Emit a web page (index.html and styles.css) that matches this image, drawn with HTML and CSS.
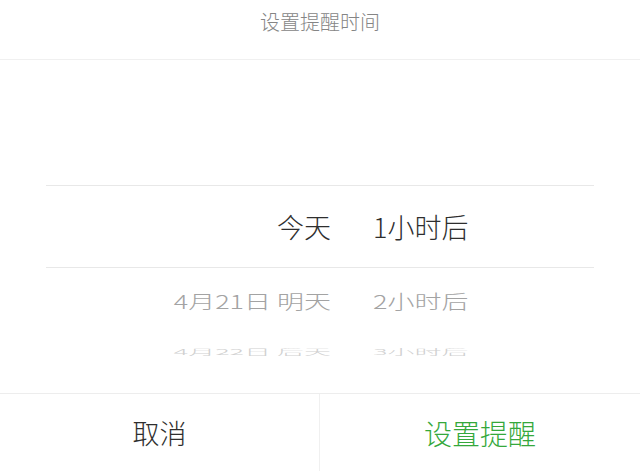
FILE: index.html
```html
<!DOCTYPE html>
<html lang="zh-CN">
<head>
<meta charset="utf-8">
<title>设置提醒时间</title>
<link rel="stylesheet" href="styles.css">
</head>
<body>
<div class="sheet">
  <header class="sheet-title">设置提醒时间</header>

  <section class="picker">
    <div class="picker-spacer"></div>
    <div class="picker-row picker-row--current">
      <span class="col-day">今天</span>
      <span class="col-hour">1小时后</span>
    </div>
    <div class="picker-row picker-row--next">
      <span class="col-day">4月21日 明天</span>
      <span class="col-hour">2小时后</span>
    </div>
    <div class="picker-row picker-row--far">
      <span class="col-day">4月22日 后天</span>
      <span class="col-hour">3小时后</span>
    </div>
  </section>

  <footer class="actions">
    <button class="action action--cancel">取消</button>
    <button class="action action--confirm">设置提醒</button>
  </footer>
</div>
</body>
</html>
```

FILE: styles.css
```css
* {
  box-sizing: border-box;
}

html,
body {
  margin: 0;
  padding: 0;
  background: #ffffff;
}

body {
  font-family: "Noto Sans CJK SC", "Noto Sans", sans-serif;
  width: 640px;
  height: 471px;
  overflow: hidden;
}

.sheet {
  display: flex;
  flex-direction: column;
  height: 471px;
}

/* title bar */
.sheet-title {
  height: 60px;
  padding-top: 8px;
  line-height: 28px;
  font-size: 20px;
  font-weight: 300;
  color: #858585;
  text-align: center;
  border-bottom: 1px solid #f0f0f0;
}

/* wheel picker */
.picker {
  flex: 1;
  display: flex;
  flex-direction: column;
  overflow: hidden;
}

.picker-spacer {
  height: 125px;
  flex: none;
}

.picker-row {
  flex: none;
  display: grid;
  grid-template-columns: 285px auto;
  column-gap: 42px;
  align-items: center;
  margin: 0 46px;
  font-size: 27px;
  font-weight: 300;
  white-space: nowrap;
}

.col-day {
  text-align: right;
}

.col-hour {
  text-align: left;
}

.picker-row--current {
  height: 83px;
  border-top: 1px solid #e8e8e8;
  border-bottom: 1px solid #e8e8e8;
  color: #2e2e2e;
}

.picker-row--next {
  height: 64px;
  color: #a3a3a3;
}

.picker-row--next span {
  transform: scaleY(0.7);
}

.picker-row--far {
  height: 38px;
  color: #d0d0d0;
}

.picker-row--far span {
  transform: scaleY(0.3);
}

/* bottom actions */
.actions {
  flex: none;
  height: 78px;
  display: grid;
  grid-template-columns: 1fr 1fr;
  border-top: 1px solid #ededed;
}

.action {
  border: 0;
  background: transparent;
  font-family: inherit;
  font-size: 27px;
  font-weight: 300;
  padding: 0;
  cursor: pointer;
}

.action--cancel {
  color: #2e2e2e;
  border-right: 1px solid #f0f0f0;
}

.action--confirm {
  font-size: 28px;
  color: #35a83b;
}
```
